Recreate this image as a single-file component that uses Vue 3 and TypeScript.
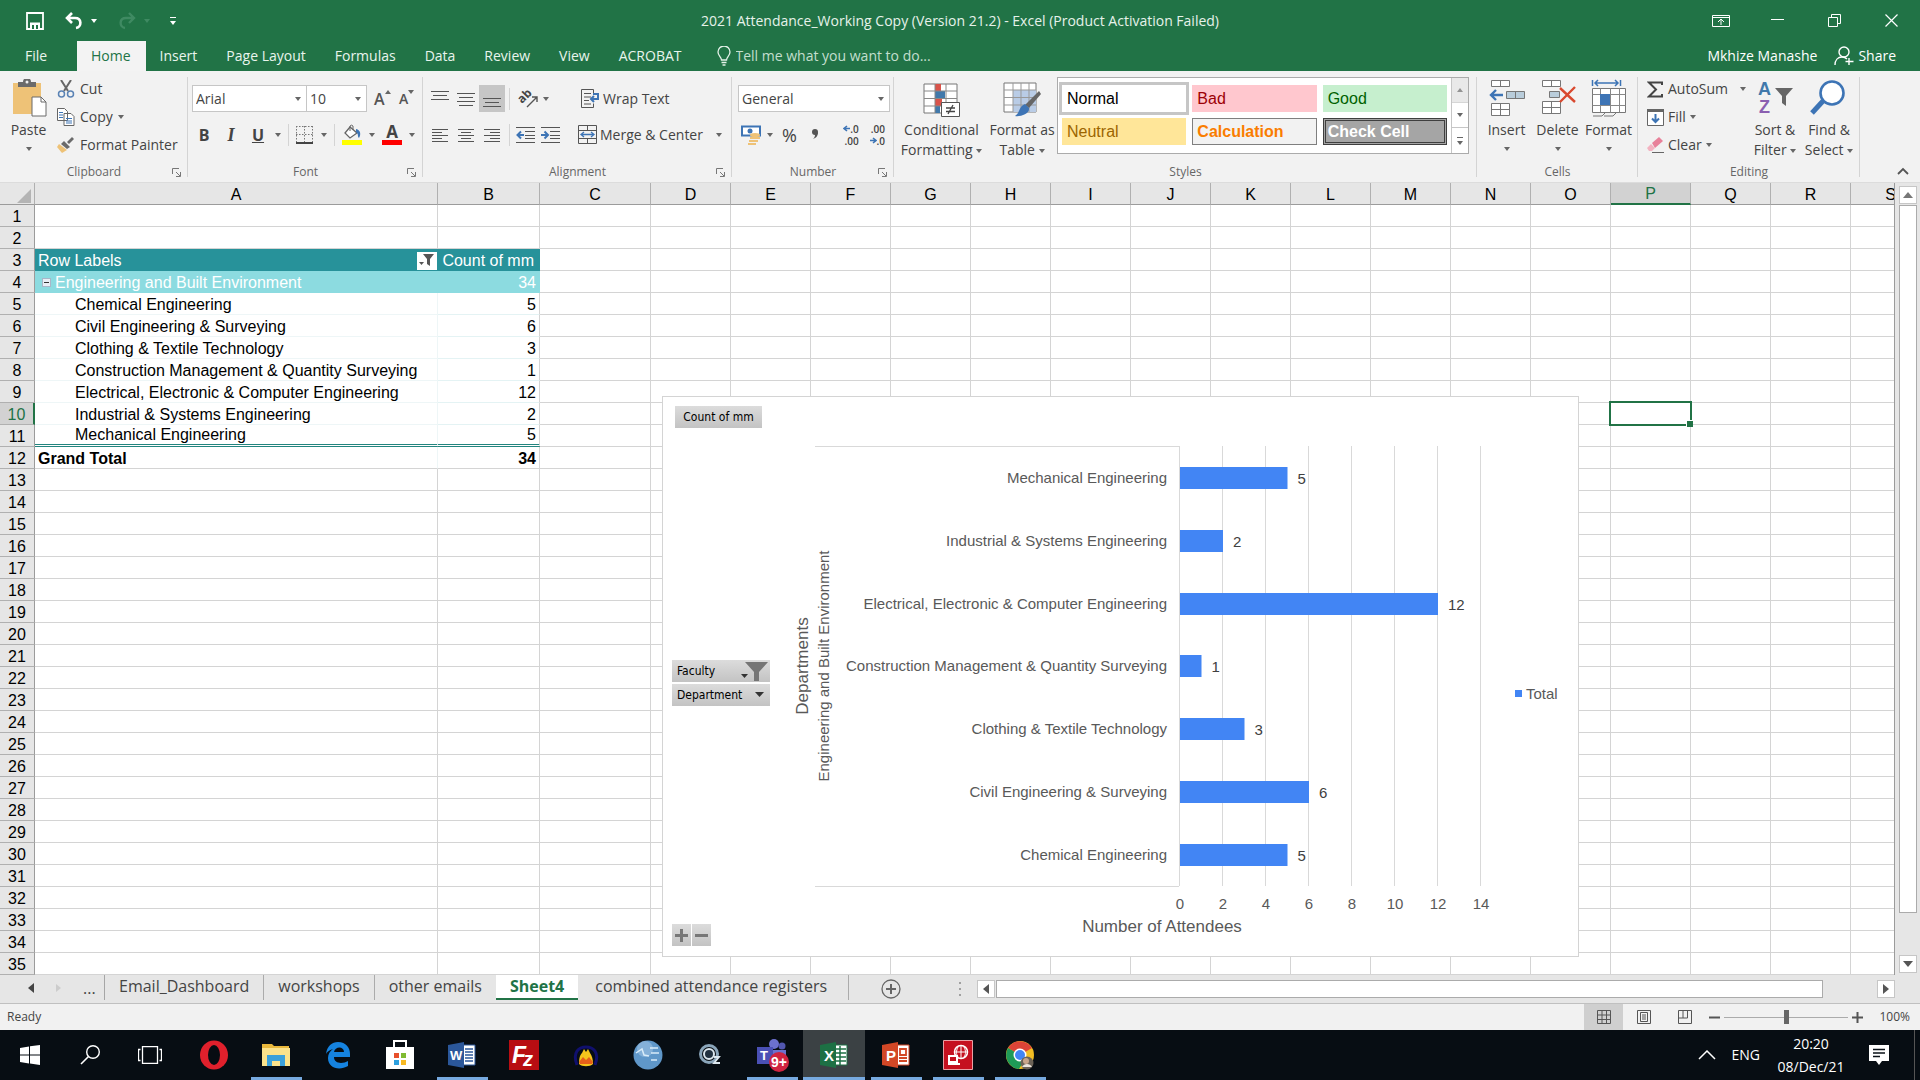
<script setup lang="ts">
import { ref } from 'vue'

interface Column { name: string; width: number }
interface PivotRow { label: string; value: number | string; kind: 'head' | 'subhead' | 'item' | 'last' | 'total' }

const columns: Column[] = [
  { name: 'A', width: 403 },
  { name: 'B', width: 102 },
  { name: 'C', width: 111 },
  ...'DEFGHIJKLMNOPQRS'.split('').map((name) => ({ name, width: 80 })),
]

const pivot: Record<number, PivotRow> = {
  3: { label: 'Row Labels', value: 'Count of mm', kind: 'head' },
  4: { label: 'Engineering and Built Environment', value: 34, kind: 'subhead' },
  5: { label: 'Chemical Engineering', value: 5, kind: 'item' },
  6: { label: 'Civil Engineering & Surveying', value: 6, kind: 'item' },
  7: { label: 'Clothing & Textile Technology', value: 3, kind: 'item' },
  8: { label: 'Construction Management & Quantity Surveying', value: 1, kind: 'item' },
  9: { label: 'Electrical, Electronic & Computer Engineering', value: 12, kind: 'item' },
  10: { label: 'Industrial & Systems Engineering', value: 2, kind: 'item' },
  11: { label: 'Mechanical Engineering', value: 5, kind: 'last' },
  12: { label: 'Grand Total', value: 34, kind: 'total' },
}

const tabs = ['Home', 'Insert', 'Page Layout', 'Formulas', 'Data', 'Review', 'View', 'ACROBAT']
const activeTab = ref('Home')
const sheets = ['Email_Dashboard', 'workshops', 'other emails', 'Sheet4', 'combined attendance registers']
const activeSheet = ref('Sheet4')
const fontName = ref('Arial')
const fontSize = ref('10')
const numberFormat = ref('General')
const zoomLevel = ref(100)

const cellStyles = ['Normal', 'Bad', 'Good', 'Neutral', 'Calculation', 'Check Cell']

// chart geometry
const axisX = 517
const unit = 21.5
const plotTop = 50
const plotBottom = 490
const band = (plotBottom - plotTop) / 7
const bars = [11, 10, 9, 8, 7, 6, 5].map((row, i) => ({
  label: pivot[row].label,
  value: Number(pivot[row].value),
  y: Math.ceil(plotTop + band * (i + 0.5)),
}))
const ticks = [0, 2, 4, 6, 8, 10, 12, 14]
</script>

<template>
  <div class="app">
    <header class="top">
      <div class="titlebar">
        <div class="quick">
          <button aria-label="Save"><svg width="18" height="18" viewBox="0 0 18 18"><path d="M1 1h16v16H1z" fill="none" stroke="#fff" stroke-width="1.800" /><path d="M4 10.500h10V17H4z" fill="#fff" /><path d="M6 13h2v4H6zM10 13h2v4h-2z" fill="#217346" /></svg></button>
          <button aria-label="Undo"><svg width="20" height="18" viewBox="0 0 20 18"><path d="M8 1L3 6l5 5M3 6h8c7 0 7 9 1 10" fill="none" stroke="#fff" stroke-width="2.600" /></svg><i class="caret light"></i></button>
          <button aria-label="Redo"><svg width="20" height="18" viewBox="0 0 20 18"><path d="M12 1l5 5-5 5M17 6H9C2 6 2 15 8 16" fill="none" stroke="#3f8a62" stroke-width="2.400" /></svg><i class="caret faint"></i></button>
          <button aria-label="Customize Quick Access Toolbar"><span class="more"><i class="caret light"></i></span></button>
        </div>
        <h1>2021 Attendance_Working Copy (Version 21.2) - Excel (Product Activation Failed)</h1>
        <div class="window">
          <button aria-label="Ribbon Display Options"><svg width="18" height="14" viewBox="0 0 18 14"><path d="M.5 1.500h17v11H.5zM.5 3.500h17M9 11V5M6 8l3-3 3 3" fill="none" stroke="#fff" /></svg></button>
          <button aria-label="Minimize"><svg width="13" height="13" viewBox="0 0 13 13"><path d="M0 5.500h13" stroke="#fff" /></svg></button>
          <button aria-label="Restore"><svg width="13" height="13" viewBox="0 0 13 13"><path d="M.5 3.500h9v9h-9zM3.500 3V.5h9v9H10" fill="none" stroke="#fff" /></svg></button>
          <button aria-label="Close"><svg width="13" height="13" viewBox="0 0 13 13"><path d="M.5.5l12 12M12.500.5l-12 12" stroke="#fff" stroke-width="1.200" /></svg></button>
        </div>
      </div>
      <nav class="tabs">
        <button class="file">File</button>
        <button v-for="t in tabs" :key="t" :class="{ active: t === activeTab }" @click="activeTab = t">{{ t }}</button>
        <label class="tell">
          <svg width="14" height="20" viewBox="0 0 14 20"><path d="M4.500 14c0-3-3.500-4-3.500-8a6 6 0 0112 0c0 4-3.500 5-3.500 8zM4.500 16.500h5M5.500 19h3" fill="none" stroke="#e3f1e8" stroke-width="1.300" /></svg>
          <input type="text" aria-label="Tell me what you want to do" placeholder="Tell me what you want to do..." />
        </label>
        <div class="account">
          <button>Mkhize Manashe</button>
          <button><svg width="20" height="20" viewBox="0 0 20 20"><circle cx="10" cy="6" r="5" fill="none" stroke="#fff" stroke-width="1.400" /><path d="M1 19c0-5 3-8 7-8 3 0 4 1 5 2M15 12v7M11.500 15.500h8" fill="none" stroke="#fff" stroke-width="1.400" /></svg>Share</button>
        </div>
      </nav>
    </header>

    <section class="ribbon">
      <div class="group clipboard">
        <div class="body">
          <button class="big">
            <svg width="38" height="38" viewBox="0 0 38 38"><path d="M3 4h28v31H3z" fill="#eec277" /><path d="M8 8V3h5a4 4 0 018 0h5v5z" fill="#6b6b6b" /><circle cx="17" cy="3" r="1.500" fill="#f1f1f1" /><path d="M22 18h9l5 5v14H22z" fill="#fff" stroke="#6b6b6b" /><path d="M31 18v5h5" fill="none" stroke="#6b6b6b" /></svg>
            <span>Paste</span><i class="caret"></i>
          </button>
          <div class="stack">
            <button><svg width="18" height="18" viewBox="0 0 18 18"><path d="M4 0l7 11M14 0L7 11" stroke="#666" stroke-width="2" /><circle cx="4.500" cy="14" r="3" fill="none" stroke="#5b83b5" stroke-width="1.500" /><circle cx="13.500" cy="14" r="3" fill="none" stroke="#5b83b5" stroke-width="1.500" /></svg>Cut</button>
            <button><svg width="18" height="18" viewBox="0 0 18 18"><path d="M.5.5h7l3 3v9H.5zM7 5.500h7l3 3v9H7z" fill="#fff" stroke="#666" /><path d="M2 4.500h4M2 7h4M2 9.500h4M9 10.500h6M9 13h6M9 15h6" stroke="#3d74b5" /></svg>Copy <i class="caret"></i></button>
            <button><svg width="18" height="18" viewBox="0 0 18 18"><path d="M2 8l8 6-5 3-5-6z" fill="#eec277" /><path d="M7 5l6 6-3 2-6-5z" fill="#6b6b6b" /><path d="M10 6l5-5 2 2-5 5z" fill="#6b6b6b" /></svg>Format Painter</button>
          </div>
        </div>
        <footer>Clipboard<svg class="launch" width="9" height="9" viewBox="0 0 9 9"><path d="M.5 6V.5H7M4 4l4 4M8.500 4v4.500H4" fill="none" stroke="#777" /></svg></footer>
      </div>

      <div class="group font">
        <div class="body rows">
          <div class="row">
            <span class="combo name"><select v-model="fontName" aria-label="Font"><option>Arial</option></select><i class="caret"></i></span>
            <span class="combo size"><select v-model="fontSize" aria-label="Font Size"><option>10</option></select><i class="caret"></i></span>
            <button class="grow" aria-label="Increase Font Size"><b>A</b><i class="caret up"></i></button>
            <button class="grow small" aria-label="Decrease Font Size"><b>A</b><i class="caret"></i></button>
          </div>
          <div class="row fmt">
            <button class="glyph bold">B</button>
            <button class="glyph ital">I</button>
            <button class="glyph under">U</button>
            <i class="caret"></i><i class="sep"></i>
            <button aria-label="Borders"><svg width="18" height="18" viewBox="0 0 18 18"><path d="M.5 0v16M8.500 0v16M16.500 0v16M0 .5h17M0 8.500h17" fill="none" stroke="#777" stroke-dasharray="1.500 1.500" /><path d="M0 17h17" stroke="#444" stroke-width="2" /></svg></button>
            <i class="caret"></i><i class="sep"></i>
            <button aria-label="Fill Color"><svg width="20" height="21" viewBox="0 0 20 21"><path d="M8 3l7 6-7 5-5-5z" fill="#fff" stroke="#666" stroke-width="1.300" /><path d="M8 7V2a2 2 0 013 0v4" fill="none" stroke="#666" /><path d="M14 5c5 1 5 6 3 9-2-2 0-4-3-6z" fill="#3d74b5" /><path d="M0 16h20v5H0z" fill="#ff0" /></svg></button>
            <i class="caret"></i>
            <button class="fcolor" aria-label="Font Color"><b>A</b></button>
            <i class="caret"></i>
          </div>
        </div>
        <footer>Font<svg class="launch" width="9" height="9" viewBox="0 0 9 9"><path d="M.5 6V.5H7M4 4l4 4M8.500 4v4.500H4" fill="none" stroke="#777" /></svg></footer>
      </div>

      <div class="group align">
        <div class="body rows">
          <div class="row">
            <button class="al" aria-label="Top Align"><svg width="18" height="18" viewBox="0 0 18 18"><path d="M0 1.500h18M2 5.500h14M0 9.500h18" stroke="#555" /></svg></button>
            <button class="al" aria-label="Middle Align"><svg width="18" height="18" viewBox="0 0 18 18"><path d="M0 3.500h18M2 7.500h14M0 11.500h18M2 15.500h14" stroke="#555" /></svg></button>
            <button class="al on" aria-label="Bottom Align"><svg width="18" height="18" viewBox="0 0 18 18"><path d="M0 8.500h18M2 12.500h14M0 16.500h18" stroke="#555" /></svg></button>
            <i class="sep"></i>
            <button class="orient" aria-label="Orientation"><span>ab</span><svg width="20" height="20" viewBox="0 0 20 20"><path d="M7 18L17 8M12 8h5v5" fill="none" stroke="#555" stroke-width="1.400" /></svg></button>
            <i class="caret"></i>
            <button class="wide"><svg width="19" height="20" viewBox="0 0 19 20"><path d="M.5.5h12v5M.5.5v18h12v-4M3 4.500h7M3 8h7M3 11.500h5M3 15h7" fill="none" stroke="#555" /><path d="M12 5h5v5h-6M13 7l-3 3 3 3" fill="none" stroke="#3d74b5" stroke-width="2" /></svg>Wrap Text</button>
          </div>
          <div class="row">
            <button class="al" aria-label="Align Left"><svg width="16" height="16" viewBox="0 0 16 16"><path d="M0 2.500h16M0 5.500h10M0 8.500h16M0 11.500h10M0 14.500h16" stroke="#555" /></svg></button>
            <button class="al" aria-label="Center"><svg width="16" height="16" viewBox="0 0 16 16"><path d="M0 2.500h16M3 5.500h10M0 8.500h16M3 11.500h10M0 14.500h16" stroke="#555" /></svg></button>
            <button class="al" aria-label="Align Right"><svg width="16" height="16" viewBox="0 0 16 16"><path d="M0 2.500h16M6 5.500h10M0 8.500h16M6 11.500h10M0 14.500h16" stroke="#555" /></svg></button>
            <i class="sep"></i>
            <button class="indent" aria-label="Decrease Indent"><svg width="19" height="18" viewBox="0 0 19 18"><path d="M0 1.500h19M9 5.500h10M9 9.500h10M9 12.500h10M0 16.500h19" stroke="#555" /><path d="M8 9H2M5 5.500L1.500 9 5 12.500" fill="none" stroke="#3d74b5" stroke-width="2" /></svg></button>
            <button class="indent" aria-label="Increase Indent"><svg width="19" height="18" viewBox="0 0 19 18"><path d="M0 1.500h19M9 5.500h10M9 9.500h10M9 12.500h10M0 16.500h19" stroke="#555" /><path d="M0 9h6M3.500 5.500L7 9l-3.500 3.500" fill="none" stroke="#3d74b5" stroke-width="2" /></svg></button>
            <button class="wide merge"><svg width="19" height="20" viewBox="0 0 19 20"><path d="M.5.5h18v18H.5zM.5 5.500h18M.5 13.500h18M9.500.5v5M9.500 13.500v5" fill="none" stroke="#555" /><path d="M3 9.500h13M6 7L3 9.500 6 12M13 7l3 2.500-3 2.500" fill="none" stroke="#3d74b5" stroke-width="1.300" /></svg>Merge &amp; Center <i class="caret"></i></button>
          </div>
        </div>
        <footer>Alignment<svg class="launch" width="9" height="9" viewBox="0 0 9 9"><path d="M.5 6V.5H7M4 4l4 4M8.500 4v4.500H4" fill="none" stroke="#777" /></svg></footer>
      </div>

      <div class="group number">
        <div class="body rows">
          <div class="row">
            <span class="combo full"><select v-model="numberFormat" aria-label="Number Format"><option>General</option></select><i class="caret"></i></span>
          </div>
          <div class="row num">
            <button aria-label="Accounting Number Format"><svg width="20" height="20" viewBox="0 0 20 20"><path d="M1 1.500h18v9H1z" fill="#fff" stroke="#3d74b5" stroke-width="2" /><circle cx="9" cy="6" r="2.500" fill="#3d74b5" /><ellipse cx="14" cy="10" rx="5" ry="2" fill="#eec277" /><path d="M9 12h10v2H9zM8 15h9v2H8zM7 18h8v2H7z" fill="#eec277" /></svg></button>
            <i class="caret"></i>
            <button class="pct" aria-label="Percent Style">%</button>
            <button class="comma" aria-label="Comma Style"><svg width="8" height="14" viewBox="0 0 8 14"><circle cx="4" cy="4" r="3" fill="#555" /><path d="M7 4c0 4-2 6-5 7 2-2 2-3 2-5z" fill="#555" /></svg></button>
            <button class="dec" aria-label="Increase Decimal"><span><svg width="7" height="7" viewBox="0 0 7 7"><path d="M7 3.500H1M4 1L1 3.500 4 6" fill="none" stroke="#3d74b5" stroke-width="1.600" /></svg>.0</span><span>.00</span></button>
            <button class="dec" aria-label="Decrease Decimal"><span>.00</span><span><svg width="7" height="7" viewBox="0 0 7 7"><path d="M0 3.500h6M3 1l3 2.500L3 6" fill="none" stroke="#3d74b5" stroke-width="1.600" /></svg>.0</span></button>
          </div>
        </div>
        <footer>Number<svg class="launch" width="9" height="9" viewBox="0 0 9 9"><path d="M.5 6V.5H7M4 4l4 4M8.500 4v4.500H4" fill="none" stroke="#777" /></svg></footer>
      </div>

      <div class="group styles">
        <div class="body">
          <button class="big cond">
            <svg width="38" height="38" viewBox="0 0 38 38"><path d="M1 5h33v29H1z" fill="#fff" stroke="#777" /><path d="M12 5h6v7h-6zM12 20h7v7h-7z" fill="#d9534a" /><path d="M12 12h10v7H12zM12 27h5v7h-5z" fill="#4179ab" /><path d="M1 12h33M1 19.500h33M1 27h33M12 5v29M23 5v29" fill="none" stroke="#888" /><path d="M18.500 23.500h18v14h-18z" fill="#fff" stroke="#555" /><path d="M23 29h9M23 32.500h9M30 26l-5 9" stroke="#444" stroke-width="1.300" /></svg>
            <span>Conditional</span><span>Formatting <i class="caret"></i></span>
          </button>
          <button class="big fat">
            <svg width="38" height="38" viewBox="0 0 38 38"><path d="M1 4h32v29H1z" fill="#fff" stroke="#777" /><path d="M10 11h23v22H10z" fill="#b9cce6" /><path d="M1 11h32M1 18.500h32M1 26h32M10 4v29M18 4v29M26 4v29" fill="none" stroke="#999" /><path d="M36 12l2 3-12 14-4-3z" fill="#666" /><path d="M22 25l4 4c1 6-9 9-14 8 5-3 4-10 10-12z" fill="#3d74b5" /></svg>
            <span>Format as</span><span>Table <i class="caret"></i></span>
          </button>
          <div class="gallery">
            <div class="swatches">
              <button v-for="s in cellStyles" :key="s" :class="s.toLowerCase().replace(' ', '-')">{{ s }}</button>
            </div>
            <div class="scroller">
              <button aria-label="Previous styles" class="off"><i class="caret up"></i></button>
              <button aria-label="Next styles"><i class="caret"></i></button>
              <button aria-label="More styles"><span class="more dark"><i class="caret"></i></span></button>
            </div>
          </div>
        </div>
        <footer>Styles</footer>
      </div>

      <div class="group cells">
        <div class="body">
          <button class="big">
            <svg width="38" height="38" viewBox="0 0 38 38"><path d="M3.500 1.500h18v6h-18zM12.500 1.500v6M3.500 24.500h18v12h-18zM3.500 30.500h18M12.500 24.500v12" fill="#fff" stroke="#777" /><path d="M18.500 12.500h18v7h-18zM27.500 12.500v7" fill="#b9cddb" stroke="#777" /><path d="M15 16H3M8 11l-5 5 5 5" fill="none" stroke="#3d74b5" stroke-width="2.400" /></svg>
            <span>Insert</span><i class="caret"></i>
          </button>
          <button class="big">
            <svg width="38" height="38" viewBox="0 0 38 38"><path d="M3.500 1.500h18v6h-18zM12.500 1.500v6M3.500 22.500h18v12h-18zM3.500 28.500h18M12.500 22.500v12" fill="#fff" stroke="#777" /><path d="M10.500 12.500h10v6h-10z" fill="#b9cddb" stroke="#777" /><path d="M21 9l15 14M36 8L21 23" fill="none" stroke="#d9492f" stroke-width="2.400" /></svg>
            <span>Delete</span><i class="caret"></i>
          </button>
          <button class="big">
            <svg width="38" height="38" viewBox="0 0 38 38"><path d="M2.500 9.500h33v24h-33z" fill="#fff" stroke="#777" /><path d="M2.500 15.500h33M2.500 26.500h33M10.500 9.500v24M20.500 9.500v24M29.500 9.500v24" stroke="#888" /><path d="M10 15h10v11H10z" fill="#3d74b5" /><path d="M2.500 1v6M30.500 1v6M5 4h23M8 1L5 4l3 3M25 1l3 3-3 3" fill="none" stroke="#3d74b5" stroke-width="1.500" /><path d="M3 37h9l3-3M14 37h9l3-3" fill="none" stroke="#777" /></svg>
            <span>Format</span><i class="caret"></i>
          </button>
        </div>
        <footer>Cells</footer>
      </div>

      <div class="group editing">
        <div class="body">
          <div class="stack">
            <button><svg width="17" height="17" viewBox="0 0 17 17"><path d="M15 4V1.500H2l7 7-7 7h13V13" fill="none" stroke="#444" stroke-width="2" /></svg>AutoSum <i class="caret far"></i></button>
            <button><svg width="17" height="17" viewBox="0 0 17 17"><path d="M.5 1.500h16v15H.5z" fill="#fff" stroke="#666" /><path d="M0 0h17v3H0z" fill="#666" /><path d="M8.500 5v8M5 9.500L8.500 13 12 9.500" fill="none" stroke="#3d74b5" stroke-width="2" /></svg>Fill <i class="caret"></i></button>
            <button><svg width="17" height="17" viewBox="0 0 17 17"><path d="M5 6l7-6 4 4-8 7z" fill="#e8819a" /><path d="M4 7l4 4-3 3H2l-2-3z" fill="#f3b3c1" /><path d="M5 15.500h12" stroke="#666" /></svg>Clear <i class="caret"></i></button>
          </div>
          <button class="big sort">
            <svg width="38" height="38" viewBox="0 0 38 38"><text x="2" y="16" font-size="18" font-weight="bold" fill="#4179ab">A</text><text x="3" y="34" font-size="18" font-weight="bold" fill="#8a5fb0">Z</text><path d="M19 9h18l-7 8v10l-4-3v-7z" fill="#666" /></svg>
            <span>Sort &amp;</span><span>Filter <i class="caret"></i></span>
          </button>
          <button class="big find">
            <svg width="38" height="38" viewBox="0 0 38 38"><circle cx="22" cy="14" r="11.500" fill="#fff" stroke="#3d74b5" stroke-width="2.600" /><path d="M13 22L2 34" stroke="#3d74b5" stroke-width="5" /></svg>
            <span>Find &amp;</span><span>Select <i class="caret"></i></span>
          </button>
        </div>
        <footer>Editing</footer>
      </div>
      <div class="collapse"><button aria-label="Collapse the Ribbon"><svg width="12" height="8" viewBox="0 0 12 8"><path d="M1 7l5-5 5 5" fill="none" stroke="#555" stroke-width="1.800" /></svg></button></div>
    </section>

    <main class="sheet">
      <div class="pane">
        <table>
          <colgroup>
            <col class="rowhead" />
            <col v-for="c in columns" :key="c.name" :style="{ width: c.width + 'px' }" />
          </colgroup>
          <thead>
            <tr>
              <th class="corner"><svg width="14" height="14" viewBox="0 0 14 14"><path d="M14 0v14H0z" fill="#b4b4b4" /></svg></th>
              <th v-for="c in columns" :key="c.name" scope="col" :class="{ sel: c.name === 'P' }">{{ c.name }}</th>
            </tr>
          </thead>
          <tbody>
            <tr v-for="r in 35" :key="r" :class="pivot[r]?.kind">
              <th scope="row" :class="{ sel: r === 10 }">{{ r }}</th>
              <template v-for="c in columns" :key="c.name">
                <td v-if="c.name === 'A' && pivot[r]" class="pl">
                  <div>
                    <button v-if="r === 4" class="toggle" aria-label="Collapse group"></button>
                    <span>{{ pivot[r].label }}</span>
                    <button v-if="r === 3" class="filter" aria-label="Filter row labels"><svg width="16" height="15" viewBox="0 0 16 15"><path d="M4 1h11l-4 5v7l-3-2V6z" fill="#555" /><path d="M0 9h5l-2.500 3z" fill="#555" /></svg></button>
                  </div>
                </td>
                <td v-else-if="c.name === 'B' && pivot[r]" class="pv">{{ pivot[r].value }}</td>
                <td v-else :class="{ cursor: c.name === 'P' && r === 10 }"></td>
              </template>
            </tr>
          </tbody>
        </table>

        <figure class="chart">
          <svg width="917" height="561" viewBox="0 0 917 561" role="img" aria-label="Number of attendees by department">
            <g stroke="#d9d9d9">
              <path v-for="t in ticks" :key="t" :d="`M${Math.round(axisX + t * unit) + 0.5} ${plotTop}V${plotBottom}`" />
              <path :d="`M153 ${plotTop + 0.5}H${axisX}M153 ${plotBottom + 0.5}H${axisX}`" />
            </g>
            <g v-for="b in bars" :key="b.label">
              <rect :x="axisX + 1" :y="b.y - 11" :width="b.value * unit" height="22" fill="#4285f4" />
              <text x="505" :y="b.y + 5" text-anchor="end">{{ b.label }}</text>
              <text class="val" :x="axisX + b.value * unit + 11" :y="b.y + 6">{{ b.value }}</text>
            </g>
            <text v-for="t in ticks" :key="t" :x="axisX + 1 + t * unit" y="513" text-anchor="middle">{{ t }}</text>
            <text class="title" x="500" y="536" text-anchor="middle">Number of Attendees</text>
            <text class="title" transform="translate(146 270) rotate(-90)" text-anchor="middle">Departments</text>
            <text transform="translate(167 270) rotate(-90)" text-anchor="middle">Engineering and Built Environment</text>
            <rect x="853" y="294" width="7" height="7" fill="#4285f4" />
            <text x="864" y="303">Total</text>
          </svg>
          <button class="field count">Count of mm</button>
          <div class="fields">
            <button class="field"><span>Faculty</span><svg width="27" height="20" viewBox="0 0 27 20"><path d="M4 1h23l-9 10v9h-5v-9z" fill="#757575" /><path d="M0 13h7l-3.500 4z" fill="#333" /></svg></button>
            <button class="field"><span>Department</span><svg width="13" height="8" viewBox="0 0 13 8"><path d="M0 1h9L4.500 6z" fill="#333" /></svg></button>
          </div>
          <div class="drill">
            <button class="field" aria-label="Expand entire field"><svg width="13" height="13" viewBox="0 0 13 13"><path d="M6.500 0v13M0 6.500h13" stroke="#777" stroke-width="3" /></svg></button>
            <button class="field" aria-label="Collapse entire field"><svg width="13" height="13" viewBox="0 0 13 13"><path d="M0 6.500h13" stroke="#777" stroke-width="3" /></svg></button>
          </div>
        </figure>
      </div>
      <div class="vscroll">
        <button aria-label="Scroll up"><svg width="10" height="6" viewBox="0 0 10 6"><path d="M0 6h10L5 0z" fill="#777" /></svg></button>
        <div class="thumb"></div>
        <button aria-label="Scroll down"><svg width="10" height="6" viewBox="0 0 10 6"><path d="M0 0h10L5 6z" fill="#555" /></svg></button>
      </div>
    </main>

    <nav class="sheetbar">
      <div class="steps">
        <button aria-label="Previous sheet"><svg width="6" height="10" viewBox="0 0 6 10"><path d="M6 0v10L0 5z" fill="#444" /></svg></button>
        <button aria-label="Next sheet"><svg width="5" height="8" viewBox="0 0 5 8"><path d="M0 0v8l5-4z" fill="#ccc" /></svg></button>
        <button class="dots3">...</button>
      </div>
      <div class="sheets">
        <button v-for="s in sheets" :key="s" :class="{ active: s === activeSheet }" @click="activeSheet = s">{{ s }}</button>
      </div>
      <button class="add" aria-label="New sheet"><svg width="20" height="20" viewBox="0 0 20 20"><circle cx="10" cy="10" r="9" fill="none" stroke="#666" stroke-width="1.300" /><path d="M10 5v10M5 10h10" stroke="#666" stroke-width="2" /></svg></button>
      <div class="hscroll">
        <span class="dots"></span>
        <button aria-label="Scroll left"><svg width="6" height="10" viewBox="0 0 6 10"><path d="M6 0v10L0 5z" fill="#555" /></svg></button>
        <div class="track"><div class="thumb"></div></div>
        <button aria-label="Scroll right"><svg width="6" height="10" viewBox="0 0 6 10"><path d="M0 0v10l6-5z" fill="#555" /></svg></button>
      </div>
    </nav>

    <footer class="status">
      <span class="ready">Ready</span>
      <button class="view on" aria-label="Normal"><svg width="14" height="14" viewBox="0 0 14 14"><path d="M.5.5h13v13H.5zM.5 5h13M.5 9.500h13M5 .5v13M9.500.5v13" fill="none" stroke="#555" /></svg></button>
      <button class="view" aria-label="Page Layout"><svg width="14" height="14" viewBox="0 0 14 14"><path d="M.5.5h13v13H.5zM3.500 2.500h7v9h-7zM5 5h4M5 7h4M5 9h4" fill="none" stroke="#555" /></svg></button>
      <button class="view" aria-label="Page Break Preview"><svg width="14" height="14" viewBox="0 0 14 14"><path d="M.5.5h13v13H.5zM5 .5V8M9.500.5V8H.5" fill="none" stroke="#555" /></svg></button>
      <div class="zoom">
        <button aria-label="Zoom out"><svg width="11" height="11" viewBox="0 0 11 11"><path d="M0 5.500h11" stroke="#555" stroke-width="2" /></svg></button>
        <input v-model="zoomLevel" type="range" min="10" max="190" aria-label="Zoom" />
        <button aria-label="Zoom in"><svg width="11" height="11" viewBox="0 0 11 11"><path d="M0 5.500h11M5.500 0v11" stroke="#555" stroke-width="2" /></svg></button>
        <span>{{ zoomLevel }}%</span>
      </div>
    </footer>

    <footer class="taskbar">
      <div class="sys">
        <button aria-label="Start"><svg width="20" height="20" viewBox="0 0 20 20"><path d="M0 3l9-1.500v8H0zM10 1.300L20 0v9.500H10zM0 10.500h9v8L0 17zM10 10.500h10V20l-10-1.500z" fill="#fff" /></svg></button>
        <button aria-label="Search"><svg width="20" height="20" viewBox="0 0 20 20"><circle cx="13" cy="7" r="6.300" fill="none" stroke="#fff" stroke-width="1.400" /><path d="M8.500 11.500L1 19" stroke="#fff" stroke-width="1.600" /></svg></button>
        <button aria-label="Task View"><svg width="24" height="18" viewBox="0 0 24 18"><path d="M4.500.5h15v17h-15zM2.500 3.500h-2v11h2M21.500 3.500h2v11h-2" fill="none" stroke="#fff" stroke-width="1.300" /></svg></button>
      </div>
      <button class="app-icon" aria-label="Opera"><svg width="30" height="30" viewBox="0 0 30 30"><ellipse cx="15" cy="15" rx="14" ry="14.500" fill="#e0202c" /><ellipse cx="15" cy="15" rx="6" ry="10" fill="#070c12" /></svg></button>
      <button class="app-icon run" aria-label="File Explorer"><svg width="30" height="30" viewBox="0 0 30 30"><path d="M1 4h10l2 2h15v20H1z" fill="#e9b83c" /><path d="M1 8h28v18H1z" fill="#fbe28b" /><path d="M6 15h18v11h-5v-5h-8v5H6z" fill="#3ba0da" /></svg></button>
      <button class="app-icon" aria-label="Edge"><svg width="30" height="30" viewBox="0 0 30 30"><path d="M3 14C4 6 9 2 15 2c8 0 12 6 12 12v3H11c0 7 9 7 14 4v5c-9 5-20 2-20-8 0-4 2-7 5-9-4 1-6 3-7 5zm8-2h10c0-6-9-6-10 0z" fill="#1583e0" /></svg></button>
      <button class="app-icon" aria-label="Store"><svg width="30" height="32" viewBox="0 0 30 32"><path d="M9 8V2h12v6" fill="none" stroke="#fff" stroke-width="2" /><path d="M1 8h28v22H1z" fill="#fff" /><path d="M9 14h5v5H9z" fill="#e8502b" /><path d="M16 14h5v5h-5z" fill="#80bb32" /><path d="M9 21h5v5H9z" fill="#2ca0e0" /><path d="M16 21h5v5h-5z" fill="#f7b922" /></svg></button>
      <button class="app-icon run" aria-label="Word"><svg width="28" height="28" viewBox="0 0 28 28"><path d="M14 4h13v20H14z" fill="#fff" stroke="#2b579a" /><path d="M17 8h8M17 11h8M17 14h8M17 17h8M17 20h8" stroke="#2b579a" stroke-width="1.500" /><path d="M0 4l16-3v26L0 24z" fill="#2b579a" /><text x="2" y="19" font-size="13" font-weight="bold" fill="#fff">W</text></svg></button>
      <button class="app-icon" aria-label="FileZilla"><svg width="30" height="30" viewBox="0 0 30 30"><path d="M0 0h30v30H0z" fill="#b80d12" /><text x="3" y="23" font-size="23" font-weight="bold" font-style="italic" fill="#fff">F</text><text x="14" y="26" font-size="20" font-weight="bold" font-style="italic" fill="#fff">z</text></svg></button>
      <button class="app-icon" aria-label="Audacity"><svg width="26" height="26" viewBox="0 0 26 26"><path d="M4 23C-1 10 6 5 13 5s14 5 9 18" fill="none" stroke="#10106e" stroke-width="3" /><path d="M6 22c0-6 1-9 3-11l2-4 2 3 2-3 2 4c2 3 3 6 3 11-3 3-11 3-14 0z" fill="#f6c51c" /><path d="M6 20l4-5 3 3 3-3 4 5-1 2H7z" fill="#e6601a" /></svg></button>
      <button class="app-icon" aria-label="Signature"><svg width="30" height="30" viewBox="0 0 30 30"><circle cx="15" cy="15" r="14.500" fill="#5f97c9" /><circle cx="12" cy="9" r="8" fill="#9cc2e2" opacity=".6" /><path d="M3 13l6-4 2 6 5 1M17 8h8M18 13h8M18 20h6" fill="none" stroke="#d9ecf9" stroke-width="1.500" /></svg></button>
      <button class="app-icon" aria-label="Quick Assist"><svg width="24" height="24" viewBox="0 0 24 24"><circle cx="11" cy="11" r="8.500" fill="none" stroke="#8aa5ba" stroke-width="3" /><circle cx="11" cy="11" r="5" fill="#20303f" stroke="#dbe6ee" stroke-width="2" /><path d="M16 14h5l-5 6h6" fill="none" stroke="#dbe6ee" stroke-width="1.800" /></svg></button>
      <button class="app-icon run" aria-label="Teams"><svg width="34" height="34" viewBox="0 0 34 34"><circle cx="19" cy="6" r="5" fill="#6c71cf" /><circle cx="27" cy="8" r="3.500" fill="#5257b0" /><path d="M12 12h19v12H12z" fill="#6c71cf" /><path d="M2 9h16v17H2z" fill="#4a50b5" /><text x="5" y="22" font-size="13" font-weight="bold" fill="#fff">T</text><circle cx="24" cy="24" r="10" fill="#cf2341" /><text x="16" y="29" font-size="14" font-weight="bold" fill="#fff">9+</text></svg></button>
      <button class="app-icon run current" aria-label="Excel"><svg width="28" height="28" viewBox="0 0 28 28"><path d="M14 4h13v20H14z" fill="#fff" stroke="#1d7044" /><path d="M15 8h11M15 12h11M15 16h11M15 20h11M20 5v19" stroke="#1d7044" stroke-width="1.500" /><path d="M0 4l16-3v26L0 24z" fill="#1d7044" /><text x="4" y="20" font-size="15" font-weight="bold" fill="#fff">X</text></svg></button>
      <button class="app-icon run" aria-label="PowerPoint"><svg width="28" height="28" viewBox="0 0 28 28"><path d="M14 4h13v20H14z" fill="#fff" stroke="#d24726" /><path d="M18 8h6v6h-6zM17 17h8M17 20h8" fill="none" stroke="#d24726" stroke-width="1.800" /><path d="M0 4l16-3v26L0 24z" fill="#d24726" /><text x="4" y="20" font-size="15" font-weight="bold" fill="#fff">P</text></svg></button>
      <button class="app-icon run" aria-label="Remote Desktop"><svg width="30" height="30" viewBox="0 0 30 30"><path d="M.5.5h29v29H.5z" fill="#c5101f" stroke="#e9a0a5" /><circle cx="18" cy="12" r="6.500" fill="none" stroke="#fff" stroke-width="1.500" /><path d="M12 12h13M18 6v12M15 7c-2 4-2 7 0 10M21 7c2 4 2 7 0 10" fill="none" stroke="#fff" /><path d="M6 16h8v6H6zM5 24h12" fill="#c5101f" stroke="#fff" stroke-width="2" /></svg></button>
      <button class="app-icon run" aria-label="Chrome"><svg width="30" height="30" viewBox="0 0 30 30"><circle cx="15" cy="15" r="14" fill="#f2bd23" /><path d="M15 15L3 8a14 14 0 0124 0z" fill="#dc4437" /><path d="M15 15L3 8a14 14 0 0011 21l6-10z" fill="#1e9a57" /><circle cx="15" cy="15" r="6.500" fill="#fff" /><circle cx="15" cy="15" r="5" fill="#4285f4" /><circle cx="22" cy="23" r="6.500" fill="#6b6257" /><circle cx="21" cy="21" r="3" fill="#c9a58a" /><path d="M17 27c2-4 8-4 10 0z" fill="#ece4dc" /></svg></button>
      <div class="tray">
        <button aria-label="Show hidden icons"><svg width="18" height="10" viewBox="0 0 18 10"><path d="M1 9l8-8 8 8" fill="none" stroke="#fff" stroke-width="1.500" /></svg></button>
        <button class="lang">ENG</button>
        <button class="clock"><span>20:20</span><span>08/Dec/21</span></button>
        <button class="note" aria-label="Notifications"><svg width="20" height="20" viewBox="0 0 20 20"><path d="M0 0h20v16h-7l-3 4-3-4H0z" fill="#fff" /><path d="M4 4.500h12M4 8h12M4 11.500h7" stroke="#0a1017" stroke-width="1.300" /></svg></button>
        <button class="peek" aria-label="Show desktop"></button>
      </div>
    </footer>
  </div>
</template>

<style>
body { margin: 0; background: #0a1017; }
</style>

<style scoped>
* { box-sizing: border-box; }
.app { display: flex; flex-direction: column; min-height: 100vh; overflow: hidden; font: 14px/20px "Open Sans", "Noto Sans", sans-serif; color: #444; background: #e6e6e6; }
button { border: 0; padding: 0; margin: 0; background: none; font: inherit; color: inherit; display: flex; align-items: center; white-space: nowrap; }
svg { display: block; flex: none; }
svg text { font-family: "Liberation Sans", Arial, sans-serif; }
.caret { display: inline-block; flex: none; border: 3px solid transparent; border-top: 4px solid #666; border-bottom: 0; vertical-align: middle; }
.caret.up { border-top: 0; border-bottom: 4px solid #666; }
.caret.light { border-top-color: #fff; }
.caret.faint { border-top-color: #3f8a62; }
.more { display: flex; flex-direction: column; align-items: center; gap: 3px; border-top: 1px solid #fff; width: 6px; padding-top: 3px; }
.more.dark { border-color: #666; }

/* title and tabs */
.top { background: #217346; color: #fff; }
.titlebar { display: grid; grid-template-columns: 1fr auto 1fr; align-items: center; height: 41px; }
.titlebar h1 { margin: 0; font-size: 14px; line-height: 20px; font-weight: 400; color: #e6f2ea; }
.quick { display: flex; align-items: center; padding-left: 26px; gap: 20px; height: 38px; }
.quick button { gap: 7px; }
.window { display: flex; justify-content: flex-end; }
.window button { width: 57px; height: 40px; justify-content: center; }
.tabs { display: flex; height: 30px; }
.tabs > button { padding: 0 15px 0 14px; color: #e9f5ed; }
.tabs > .file { width: 77px; padding: 0 0 0 25px; }
.tabs > .active { background: #f3f3f3; color: #217346; }
.tell { display: flex; align-items: center; gap: 5px; padding-left: 20px; flex: 1; }
.tell input { border: 0; background: none; color: #fff; font: inherit; width: 260px; padding: 0; }
.tell input::placeholder { color: #c3dfce; opacity: 1; }
.account { display: flex; gap: 17px; padding-right: 24px; }
.account button { gap: 4px; }

/* ribbon */
.ribbon { display: flex; background: #f2f2f2; border-bottom: 1px solid #dcdcdc; }
.group { position: relative; display: flex; flex-direction: column; flex: none; }
.group::after { content: ""; position: absolute; right: 0; top: 6px; bottom: 5px; width: 1px; background: #d4d4d4; }
.body { display: flex; height: 91px; }
.group footer { position: relative; height: 20px; text-align: center; font-size: 12px; line-height: 20px; color: #666; }
.launch { position: absolute; right: 7px; top: 6px; }
.clipboard { width: 188px; }
.font { width: 235px; }
.align { width: 309px; }
.number { width: 162px; }
.styles { flex: 1; }
.cells { width: 161px; }
.editing { width: 222px; }
.collapse { width: 60px; display: flex; align-items: flex-end; justify-content: flex-end; padding: 0 11px 7px 0; }
.big { flex-direction: column; padding-top: 8px; height: 90px; }
.big svg { margin-bottom: 3px; }
.big > .caret { margin-top: 7px; }
.stack { display: flex; flex-direction: column; padding-top: 4px; }
.stack button { height: 28px; gap: 5px; }
.clipboard .big { width: 57px; }
.rows { flex-direction: column; padding-top: 14px; gap: 9px; }
.row { display: flex; align-items: center; height: 27px; }
.sep { width: 1px; height: 22px; background: #d4d4d4; flex: none; }
.combo { position: relative; display: flex; height: 27px; background: #fff; border: 1px solid #c6c6c6; }
.combo select { appearance: none; width: 100%; border: 0; background: none; font: inherit; color: inherit; padding: 0 3px; }
.combo .caret { position: absolute; right: 5px; top: 11px; pointer-events: none; }
.combo.name { width: 115px; margin-left: 4px; }
.combo.size { width: 60px; border-left: 0; }
.combo.full { width: 152px; margin-left: 6px; }
.grow { margin-left: 7px; width: 18px; }
.grow b { font-weight: 600; font-size: 16px; color: #555; }
.grow.small b { font-size: 14px; }
.grow .caret { margin-top: -14px; }
.fmt { padding-left: 6px; gap: 7px; }
.glyph { width: 20px; justify-content: center; font-size: 16px; font-weight: 700; }
.ital { font-style: italic; font-family: "Liberation Serif", serif; font-size: 18px; }
.under { text-decoration: underline; }
.fcolor { width: 20px; height: 21px; border-bottom: 5px solid #f00; justify-content: center; font-size: 17px; line-height: 16px; }
.align .row { padding-left: 4px; }
.al { width: 26px; height: 27px; justify-content: center; }
.al.on { background: #c6c6c6; }
.align .sep { margin: 0 6px 0 4px; }
.orient { position: relative; width: 24px; justify-content: flex-end; margin-right: 3px; }
.orient span { position: absolute; left: 1px; top: 0; font-size: 12px; line-height: 14px; font-weight: 700; transform: rotate(-45deg); }
.wide { gap: 3px; margin-left: 32px; }
.merge { margin-left: 12px; }
.indent { margin-right: 6px; }
.wide .caret { margin-left: 10px; }
.num { padding-left: 9px; }
.num .caret { margin: 0 9px 0 6px; }
.pct { font-size: 18px; width: 16px; }
.comma { margin: 0 22px 0 14px; }
.dec { flex-direction: column; width: 18px; margin-right: 9px; font-size: 10px; line-height: 12px; font-weight: 600; align-items: flex-end; }
.dec span { display: flex; align-items: center; }
.styles .cond { width: 95px; }
.styles .fat { width: 66px; margin-right: 2px; }
.gallery { display: flex; flex: 1; height: 77px; margin: 6px 8px 0 0; border: 1px solid #ababab; background: #fff; }
.swatches { display: grid; grid-template-columns: repeat(3, 1fr); grid-template-rows: 27px 27px; gap: 6px; padding: 7px 4px; flex: 1; }
.swatches button { font: 16px/20px "Liberation Sans", Arial, sans-serif; padding-left: 5px; }
.normal { color: #000; outline: 3px solid #c6c6c6; }
.bad { background: #ffc7ce; color: #9c0006; }
.good { background: #c6efce; color: #006100; }
.neutral { background: #ffe699; color: #9c6500; }
.swatches .calculation { background: #f2f2f2; color: #fa7d00; font-weight: 700; border: 1px solid #7f7f7f; padding-left: 4px; }
.swatches .check-cell { background: #a5a5a5; color: #fff; font-weight: 700; border: 3px double #3f3f3f; padding-left: 2px; }
.scroller { width: 17px; display: grid; grid-template-rows: repeat(3, 1fr); border-left: 1px solid #c6c6c6; }
.scroller button { justify-content: center; border-bottom: 1px solid #c6c6c6; }
.scroller button:last-child { border-bottom: 0; }
.scroller .off { background: #e1e1e1; opacity: .7; }
.cells .body { padding: 0 4px; }
.cells .big { width: 51px; }
.editing .stack { padding-left: 9px; width: 110px; flex: none; }
.editing .stack button { gap: 4px; }
.caret.far { margin-left: 8px; }
.sort { width: 54px; }
.find { width: 54px; }

/* worksheet */
.sheet { display: flex; background: #e6e6e6; }
.pane { position: relative; flex: 1; min-width: 0; overflow: hidden; border-right: 1px solid #9b9b9b; background: #fff; }
table { table-layout: fixed; width: 1931px; min-width: 100%; border-collapse: separate; border-spacing: 0; font: 16px/18px "Liberation Sans", Arial, sans-serif; color: #000; }
.rowhead { width: 35px; }
th, td { height: 22px; padding: 2px 0 0 0; border-right: 1px solid #d4d4d4; border-bottom: 1px solid #d4d4d4; overflow: hidden; white-space: nowrap; }
th { background: #e6e6e6; font-weight: 400; border-color: #b0b0b0; text-align: center; overflow: visible; }
thead th { border-bottom-color: #9b9b9b; }
tbody th { border-right-color: #9b9b9b; }
.corner svg { margin: 2px 3px 0 auto; }
th.sel { background: #d2d2d2; color: #217346; }
thead th.sel { border-bottom: 2px solid #217346; }
tbody th.sel { border-right: 2px solid #217346; }
.pl { border-color: #eef6f7; }
.pv { text-align: right; padding-right: 3px; border-bottom-color: #e4f3f4; }
.pl div { display: flex; align-items: center; padding-left: 40px; height: 18px; }
.head .pl div, .total .pl div { padding-left: 3px; }
.subhead .pl div { padding-left: 7px; gap: 4px; }
.head .pl, .head .pv { background: #27929a; color: #fff; border-color: #27929a; }
.head .pv { padding-right: 5px; }
.subhead .pl, .subhead .pv { background: #8cdbe0; color: #fff; border-color: #8cdbe0; }
.last .pl, .last .pv { padding-top: 1px; border-bottom: 3px double #23857f; }
.total { font-weight: 700; }
.total .pl, .total .pv { border-bottom-color: #d4d4d4; }
.total th { font-weight: 400; }
.toggle { width: 9px; height: 9px; background: #e9eef5; border: 1px solid #a9b6c8; position: relative; }
.toggle::after { content: ""; position: absolute; left: 1px; right: 1px; top: 3px; height: 1px; background: #333; }
.filter { margin-left: auto; width: 20px; height: 18px; background: #fff; justify-content: center; }
.cursor { position: relative; overflow: visible; }
.cursor::before { content: ""; position: absolute; inset: -2px; border: 2px solid #217346; }
.cursor::after { content: ""; position: absolute; right: -3px; bottom: -3px; width: 6px; height: 6px; background: #217346; border: 1px solid #fff; border-right: 0; border-bottom: 0; }

.chart { position: absolute; left: 662px; top: 213px; margin: 0; width: 917px; height: 561px; background: #fff; outline: 1px solid #d4d4d4; outline-offset: -1px; }
.chart text { font-size: 15px; fill: #595959; }
.chart .title { font-size: 17px; }
.chart .val { fill: #404040; }
.field { justify-content: center; height: 22px; background: linear-gradient(#dcdcdc, #c3c3c3); color: #000; font: 12px/20px "DejaVu Sans Condensed", "DejaVu Sans", sans-serif; }
.count { position: absolute; left: 13px; top: 10px; width: 87px; }
.fields { position: absolute; left: 10px; top: 264px; width: 98px; display: flex; flex-direction: column; gap: 2px; }
.fields .field { justify-content: space-between; padding: 0 2px 0 5px; }
.drill { position: absolute; left: 10px; top: 528px; display: flex; gap: 1px; }
.drill .field { width: 19px; }

.vscroll { width: 25px; display: flex; flex-direction: column; align-items: center; padding: 3px 0 2px 0; }
.vscroll button, .hscroll button { width: 18px; height: 18px; background: #fff; border: 1px solid #c6c6c6; justify-content: center; flex: none; }
.vscroll .thumb { width: 18px; flex: none; height: 90%; margin: 1px 0 auto; background: #fff; border: 1px solid #ababab; }

/* sheet tabs */
.sheetbar { display: flex; align-items: center; height: 29px; background: #e6e6e6; border-bottom: 1px solid #c0c0c0; font-size: 16px; }
.steps { display: flex; width: 105px; padding-left: 28px; gap: 22px; align-items: center; height: 25px; margin-bottom: 3px; border-right: 1px solid #a6a6a6; }
.sheets { display: flex; align-self: flex-start; }
.sheets button { height: 25px; padding: 0 14px 3px; border-right: 1px solid #ababab; }
.sheets button:nth-child(3) { border-right: 0; }
.sheets button:last-child { padding: 0 21px 3px 17px; }
.sheets .active { background: #fff; color: #217346; font-weight: 700; border: 0; border-bottom: 2px solid #217346; padding-bottom: 1px; }
.add { margin-left: 32px; }
.hscroll { display: flex; align-items: center; flex: 1; margin: 0 25px 0 58px; }
.dots { width: 2px; height: 14px; margin-right: 16px; background: repeating-linear-gradient(#a0a0a0 0 2px, transparent 2px 6px); }
.track { flex: 1; margin: 0 1px; }
.track .thumb { width: 94%; height: 18px; background: #fff; border: 1px solid #ababab; }

/* status bar */
.status { display: flex; height: 26px; background: #f1f1f1; align-items: center; font-size: 12px; }
.ready { padding-left: 7px; margin-right: auto; }
.view { width: 41px; height: 26px; justify-content: center; }
.view.on { background: #cfcfcf; width: 39px; }
.zoom { display: flex; align-items: center; gap: 4px; padding: 0 10px 0 4px; }
.zoom span { padding-left: 12px; }
.zoom input { appearance: none; width: 124px; height: 16px; margin: 0; background: linear-gradient(#ababab, #ababab) center / 100% 1px no-repeat; }
.zoom input::-webkit-slider-thumb { appearance: none; width: 5px; height: 14px; background: #666; }

/* taskbar */
.taskbar { display: flex; height: 50px; background: #070d13; color: #fff; }
.sys { display: flex; width: 183px; }
.sys button { width: 60px; justify-content: center; }
.app-icon { width: 62px; justify-content: center; position: relative; }
.run::after { content: ""; position: absolute; left: 6px; right: 5px; bottom: 0; height: 3px; background: #76a9df; }
.current { background: #3b4144; }
.current::after { left: 0; right: 0; }
.tray { display: flex; margin-left: auto; }
.lang { margin: 0 15px 0 16px; }
.clock { flex-direction: column; justify-content: center; line-height: 23px; width: 72px; }
.note { margin: 0 25px 0 22px; }
.peek { width: 6px; border-left: 1px solid #555; }
</style>
